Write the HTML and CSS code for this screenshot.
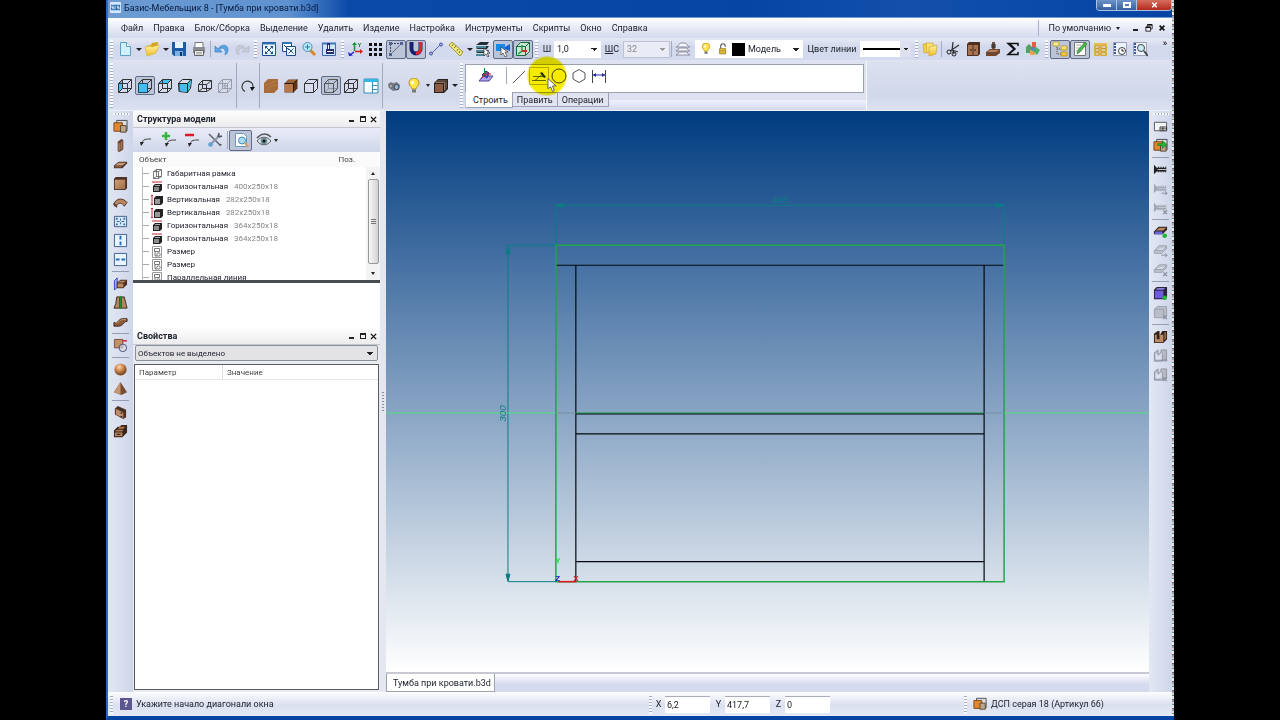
FILE: index.html
```html
<!DOCTYPE html>
<html lang="ru">
<head>
<meta charset="utf-8">
<title>Базис-Мебельщик 8 - [Тумба при кровати.b3d]</title>
<link rel="stylesheet" href="styles.css">
</head>
<body>
<svg class="defs" aria-hidden="true">
<defs>
<linearGradient id="wood" x1="0" y1="0" x2="1" y2="1"><stop offset="0" stop-color="#d0a078"/><stop offset="1" stop-color="#9c6c48"/></linearGradient>
<radialGradient id="ball" cx=".4" cy=".3" r=".7"><stop offset="0" stop-color="#ffd8a8"/><stop offset=".5" stop-color="#c8824a"/><stop offset="1" stop-color="#6a3c1c"/></radialGradient>
<linearGradient id="gold" x1="0" y1="0" x2="0" y2="1"><stop offset="0" stop-color="#fff3a0"/><stop offset="1" stop-color="#eebe28"/></linearGradient>
</defs>
<symbol id="cube" viewBox="0 0 16 16"><path d="M1.5 5.5h9v9h-9zM5.5 1.5h9v9h-9zM1.5 5.5l4-4M10.5 5.5l4-4M10.5 14.5l4-4M1.5 14.5l4-4" fill="none" stroke="#333"/></symbol>
<symbol id="cube-soft" viewBox="0 0 16 16"><path d="M5.500 1.500v9h9M1.500 14.500l4-4" fill="none" stroke="#8d93a3"/><path d="M1.500 5.500h9v9h-9zM1.500 5.500l4-4h9v9l-4 4M10.500 5.500l4-4" fill="none" stroke="#555"/></symbol>
<symbol id="cube-left" viewBox="0 0 16 16"><path d="M1.500 5.500l4-4v9l-4 4z" fill="#45bdf0"/><use href="#cube"/></symbol>
<symbol id="cube-front" viewBox="0 0 16 16"><use href="#cube"/><path d="M1.500 5.500h9v9h-9z" fill="#45bdf0" stroke="#174c68"/></symbol>
<symbol id="cube-top" viewBox="0 0 16 16"><path d="M1.500 5.500l4-4h9l-4 4z" fill="#45bdf0"/><use href="#cube"/></symbol>
<symbol id="cube-iso" viewBox="0 0 16 16"><path d="M1.500 5l4-3.500h9l-1 8.500-3 4.500-8-1z" fill="none" stroke="#222"/><path d="M2 5h8l4-2-1.500 8-3 3-7-1z" fill="#45bdf0"/><path d="M2 5.500h8.500l3.500-4M10.500 5.500v9M2 5.500v8" fill="none" stroke="#222"/></symbol>
<symbol id="cube-back" viewBox="0 0 16 16"><path d="M1.500 6.500h8v7h-8zM5.500 2.500h9v8h-9zM1.500 6.500l4-4M9.500 6.500l5-4M9.500 13.500l5-3M1.500 13.500l4-3" fill="none" stroke="#333"/></symbol>
<symbol id="cube-dim" viewBox="0 0 16 16"><path d="M1.500 5.500h9v9h-9zM5.500 1.500h9v9h-9zM1.500 5.500l4-4M10.500 5.500l4-4M10.500 14.500l4-4M1.500 14.500l4-4M8 5v6M5 8h6" fill="none" stroke="#999daa"/></symbol>
<symbol id="cube-clear" viewBox="0 0 16 16"><path d="M1.500 5.500h9v9h-9zM1.500 5.500l4-4h9v9l-4 4M10.500 5.500l4-4" fill="#d8dcee" stroke="#333"/></symbol>
<symbol id="cube-wood" viewBox="0 0 16 16"><path d="M1.500 5.500l4-4h9v9l-4 4h-9z" fill="#5e351a"/><path d="M2 6h8v8H2z" fill="#b97843"/><path d="M2.500 5l3-3h8l-3 3z" fill="#9a6235"/><path d="M1.500 5.500h9v9M10.500 5.500l4-4" fill="none" stroke="#2c1a0c"/></symbol>
<symbol id="block-wood" viewBox="0 0 16 16"><path d="M1 5l4-4h10v10l-4 4H1z" fill="#a86c3c"/><path d="M2 8l6-3 6-2M3 12l5-4 6-1" fill="none" stroke="#b47c4c"/></symbol>
<symbol id="views" viewBox="0 0 16 16"><path d="M1 1h14v14H1z" fill="#f8fdff" stroke="#3a8cb4"/><path d="M1 1h14v3H1z" fill="#38b6dc"/><path d="M9.500 4v11M9.500 7.500h5M9.500 11.500h5" stroke="#3a8cb4"/></symbol>
<symbol id="new" viewBox="0 0 16 16"><path d="M3.500 1.500h6l4 4v9h-10z" fill="#d2f0fb" stroke="#5e9ec0"/><path d="M9.500 1.500v4h4" fill="#fff" stroke="#5e9ec0"/></symbol>
<symbol id="open" viewBox="0 0 16 16"><path d="M2 5l5-1 1-2 6-1-1 9-10 4z" fill="#d2a520"/><path d="M1 6l5-1 2 1 7-2-3 8-9 3z" fill="url(#gold)" stroke="#d9ae2c" stroke-width=".6"/></symbol>
<symbol id="save" viewBox="0 0 16 16"><path d="M1 1h14v14H3l-2-2z" fill="#1d5ca4"/><path d="M4 1h8v6H4z" fill="#eaf4fd"/><path d="M4 10h8v5H4z" fill="#7cb0e2"/><path d="M9 11h2v4H9z" fill="#0e3566"/></symbol>
<symbol id="print" viewBox="0 0 16 16"><path d="M4 1.500h8v5H4z" fill="#fff" stroke="#777"/><path d="M2 6h12v6H2z" fill="#8a8e95"/><path d="M3.500 9.500h9v5h-9z" fill="#eee" stroke="#666"/><path d="M5 11.500h6M5 13h6" stroke="#888" stroke-width=".7"/></symbol>
<symbol id="undo" viewBox="0 0 16 16"><path d="M4 8c3-5 9-5 10 0 0 3-1 5-3 6 1-3 0-7-3-7-2 0-2 1-2 2l2 2H1V5z" fill="#58a6e6" stroke="#397fbe" stroke-width=".7"/></symbol>
<symbol id="redo" viewBox="0 0 16 16"><path d="M12 8c-3-5-9-5-10 0 0 3 1 5 3 6-1-3 0-7 3-7 2 0 2 1 2 2l-2 2h7V5z" fill="#c6c9d6" stroke="#b4b8c8" stroke-width=".7"/></symbol>
<symbol id="fit" viewBox="0 0 16 16"><path d="M1.500 1.500h13v13h-13z" fill="#eff8ff" stroke="#1c4f86"/><path d="M1 2.500h14" stroke="#2b75b4" stroke-width="2"/><path d="M5 6l6 6M11 6l-6 6" stroke="#1c4f86"/><path d="M4 5h3l-3 3zM12 5H9l3 3zM4 13v-3l3 3zM12 13v-3l-3 3z" fill="#1c4f86"/></symbol>
<symbol id="fit2" viewBox="0 0 16 16"><path d="M1.500 1.500h9v9h-9z" fill="#fff" stroke="#1c4f86"/><path d="M1 2h10" stroke="#2b75b4" stroke-width="2"/><path d="M3 4l5 5M5.500 5.500h9v9h-9z" fill="#eff8ff" stroke="#1c4f86"/><path d="M7.500 7.500l5 5M12.500 7.500l-5 5" stroke="#1c4f86"/></symbol>
<symbol id="lens" viewBox="0 0 16 16"><path d="M9 9l5 5" stroke="#d48a2c" stroke-width="3"/><circle cx="6.500" cy="6" r="4.500" fill="#b8e8f8" stroke="#4c8fb8"/><path d="M4 6h5M6.500 3.500v5" stroke="#2879a8"/></symbol>
<symbol id="pan" viewBox="0 0 16 16"><path d="M1.500 2.500h13v12h-13z" fill="#cfe6fb" stroke="#3b6ca8"/><path d="M1 2.500h14" stroke="#3b78bd" stroke-width="2"/><path d="M6 2h3v6h4v5H5V8h1z" fill="#26306e"/><path d="M7 4h1v4H7zM6 10h6v1H6z" fill="#fff"/></symbol>
<symbol id="axes" viewBox="0 0 16 16"><path d="M6.500 3v7" stroke="#169230" stroke-width="1.500"/><path d="M4 4l2.500-3L9 4z" fill="#169230"/><path d="M7 10.500h6" stroke="#cc2020" stroke-width="1.500"/><path d="M12 8l3 2.500-3 2.500z" fill="#cc2020"/><path d="M6 11l-4 3" stroke="#2020c8" stroke-width="1.500"/><path d="M0 11l1 4 4-.500z" fill="#2020c8"/><path d="M10 2l1.500 2L13 2M11.500 4v2" stroke="#169230" fill="none"/></symbol>
<symbol id="dots" viewBox="0 0 16 16"><path d="M1 2h3v3H1zM6 2h3v3H6zM11 2h3v3h-3zM1 7h3v3H1zM6 7h3v3H6zM11 7h3v3h-3zM1 12h3v3H1zM6 12h3v3H6zM11 12h3v3h-3z" fill="#111"/></symbol>
<symbol id="ortho" viewBox="0 0 16 16"><path d="M2.500 14V2.500H14" fill="none" stroke="#3a416f" stroke-dasharray="2 1"/><path d="M3 13l9-9" stroke="#3a416f" stroke-dasharray="2 1"/><path d="M1 1h3v3H1zM12 1h3v3h-3zM1 12h3v3H1z" fill="#536092"/></symbol>
<symbol id="magnet" viewBox="0 0 16 16"><path d="M3.500 1v7a4.500 4.500 0 0 0 9 0V1" fill="none" stroke="#17206e" stroke-width="4"/><path d="M8 12.500a4.500 4.500 0 0 0 4.500-4.500V1" fill="none" stroke="#d92828" stroke-width="3"/></symbol>
<symbol id="segment" viewBox="0 0 16 16"><path d="M3 13L13 3" stroke="#5360b0"/><circle cx="3" cy="12.500" r="1.500" fill="#a5b5ef" stroke="#4250a0"/><circle cx="13" cy="3.500" r="1.500" fill="#a5b5ef" stroke="#4250a0"/></symbol>
<symbol id="ruler" viewBox="0 0 16 16"><path d="M1 4l3-3 11 10-3 4z" fill="#f0ea78" stroke="#9c963e"/><path d="M5 3L4 5M8 5L6 7M10 8L9 10M12 10l-1 2" stroke="#777032"/></symbol>
<symbol id="sheets" viewBox="0 0 16 16"><path d="M1 4l4-3h9l-2 3zM1 8l4-3h9l-2 3zM1 12l4-3h9l-2 3z" fill="#252e34"/><path d="M1 5h10v2H1zM1 9h10v2H1zM1 13h8v2H1z" fill="#4b8896"/><path d="M9 7v8l2-2 2 3 1-1-2-3h3z" fill="#fff" stroke="#222" stroke-width=".7"/></symbol>
<symbol id="pick" viewBox="0 0 16 16"><path d="M1 3h9v7H1z" fill="#1688e8"/><path d="M10 6l5-3v7l-5-2z" fill="#1b5ecc"/><path d="M6 6v8l2-2 2 4 2-1-2-4h3z" fill="#fff" stroke="#333" stroke-width=".7"/></symbol>
<symbol id="cube-axes" viewBox="0 0 16 16"><path d="M1.500 5.500l4-4h9v9l-4 4h-9zM1.500 5.500h9v9M10.500 5.500l4-4" fill="#c5e4d2" stroke="#176b3c"/><path d="M7 4v6l-4 3" stroke="#1ca03e" stroke-width="1.500" fill="none"/><path d="M7 10h5" stroke="#c62d25" stroke-width="2"/></symbol>
<symbol id="layers" viewBox="0 0 16 16"><path d="M1 6c3 0 2-4 6-4h2c4 0 3 4 6 4zM1 10c2 0 2-2 3-3h8c1 1 1 3 3 3zM1 14c2 0 2-2 3-3h8c1 1 1 3 3 3z" fill="#f4f6fb" stroke="#8a8fa0"/></symbol>
<symbol id="bulb" viewBox="0 0 16 16"><path d="M6 11c0-2-3-3-3-6a5 5 0 0 1 10 0c0 3-3 4-3 6z" fill="#ffe44a" stroke="#ba8e22"/><path d="M6 11.500h4v3H6z" fill="#777"/><circle cx="6.500" cy="4.500" r="1.500" fill="#fff"/></symbol>
<symbol id="lock" viewBox="0 0 16 16"><path d="M5 7V4a3 3 0 0 1 6 0v1" fill="none" stroke="#555" stroke-width="1.500"/><path d="M3.500 7.500h8v7h-8z" fill="#f2cf4a" stroke="#8a6a10"/><path d="M4 10h7M4 12h7" stroke="#b18b24"/></symbol>
<symbol id="folders" viewBox="0 0 16 16"><path d="M1 3h7l1 7-7 2z" fill="#f2d24c" stroke="#c99c22" stroke-width=".6"/><path d="M4 2h7l1 9-7 1z" fill="#f9e272" stroke="#c99c22" stroke-width=".6"/><path d="M7 6l8-2-1 9-7 2z" fill="url(#gold)" stroke="#c99c22" stroke-width=".6"/></symbol>
<symbol id="cut" viewBox="0 0 16 16"><path d="M8 1L7 10M14 4L5 10M7 9l6 2M8 9l1 4" stroke="#333" stroke-width="1.300"/><circle cx="4" cy="11" r="2" fill="none" stroke="#222"/><circle cx="9" cy="13" r="2" fill="none" stroke="#222"/></symbol>
<symbol id="cabinet" viewBox="0 0 16 16"><path d="M2 3l2-2h11v12l-2 2H2z" fill="#4f2f20"/><path d="M3 4h4.500v10H3zM8.500 4H13v10H8.500z" fill="#a57252"/><path d="M6 8v2M10 8v2" stroke="#2b160c"/></symbol>
<symbol id="plinth" viewBox="0 0 16 16"><path d="M7 1h3v9H7z" fill="#6a5448"/><path d="M1 11l4-3h10v4l-4 3H1z" fill="#70472d"/><path d="M2 11l3-2h9l-3 2z" fill="#b48160"/><path d="M6 4h5M6 6h5" stroke="#222"/></symbol>
<symbol id="sigma" viewBox="0 0 16 16"><path d="M13 5V2.500H3l6 5.500-6 5.500h10V11M4 2l6 6-6 5" fill="none" stroke="#111" stroke-width="1.500"/></symbol>
<symbol id="shapes" viewBox="0 0 16 16"><path d="M1 6l3-3 3 3v6H1z" fill="#55a05c"/><path d="M7 1h4v6H7z" fill="#e95b49"/><path d="M5 9h5v5H5z" fill="#e9a14b"/><path d="M11 6l4 3-3 5-4-4z" fill="#4bae6e"/><circle cx="8" cy="8" r="2" fill="#4b89be"/></symbol>
<symbol id="treeicon" viewBox="0 0 16 16"><path d="M5 4v9h6M5 8h6" fill="none" stroke="#444" stroke-dasharray="1 1"/><path d="M1 1h6v4H1zM9 5h6v4H9zM9 11h6v4H9z" fill="url(#gold)" stroke="#b38d1b" stroke-width=".7"/></symbol>
<symbol id="edit" viewBox="0 0 16 16"><path d="M2.500 1.500h11v13h-11z" fill="#fff" stroke="#777"/><path d="M4 4h5M4 7h4M4 10h3" stroke="#aaa"/><path d="M5 13l1-4 7-8 2 2-7 8z" fill="#48b84d" stroke="#22702a" stroke-width=".6"/></symbol>
<symbol id="gridicon" viewBox="0 0 16 16"><path d="M2 2h13v13H2z" fill="#e7bd55"/><path d="M3 5h4v2H3zM9 5h5v2H9zM3 8h4v2H3zM9 8h5v2H9zM3 12h4v2H3zM9 12h5v2H9z" fill="#fff6cf" stroke="#a37420" stroke-width=".6"/></symbol>
<symbol id="history" viewBox="0 0 16 16"><path d="M1.500 1.500h13v13h-13z" fill="#edf1fb" stroke="#9ba3b9"/><path d="M3 2v12" stroke="#3459a8" stroke-dasharray="2 1" stroke-width="2"/><circle cx="10" cy="10" r="3.500" fill="#fff" stroke="#444"/><path d="M10 8v2h2" stroke="#222" fill="none"/></symbol>
<symbol id="preview" viewBox="0 0 16 16"><path d="M1.500 1.500h13v13h-13z" fill="#edf1fb" stroke="#9ba3b9"/><path d="M3 2v12" stroke="#3459a8" stroke-dasharray="2 1" stroke-width="2"/><circle cx="9" cy="7" r="3.500" fill="#cdeaf8" stroke="#444"/><path d="M12 10l4 5" stroke="#444" stroke-width="2"/></symbol>
<symbol id="rotate" viewBox="0 0 16 16"><path d="M5 13.500a5.500 5.500 0 1 1 8-4" fill="none" stroke="#333" stroke-width="1.200"/><path d="M10 9h5l-3 4z" fill="#111"/></symbol>
<symbol id="camera" viewBox="0 0 16 16"><path d="M2 6l3-2 2 1 4-1 3 3-1 5-6 1-4-3z" fill="#7d808c"/><circle cx="10.500" cy="9" r="2.500" fill="#8eb9e6" stroke="#444"/><circle cx="5" cy="8" r="2" fill="#aaadb8" stroke="#666"/></symbol>
<symbol id="box" viewBox="0 0 16 16"><path d="M1 5l4-4h10v10l-4 4H1z" fill="#27211e"/><path d="M2 6h8v8H2z" fill="#8a5a42"/><path d="M11 5l3-3v8l-3 3zM5 2h8l-2 3H2z" fill="#95705c"/><path d="M4 3h9v8" fill="none" stroke="#222"/></symbol>
<symbol id="place" viewBox="0 0 16 16"><path d="M1 13l4-5h10l-4 5z" fill="#aaa7df" stroke="#4f439b"/><path d="M4 7l4-4 3 2-2 5z" fill="#6656b8" stroke="#35298c"/><path d="M6.500 0v8" stroke="#168c2f"/><path d="M7 6h6M7 6l-4 5" stroke="#c62020"/></symbol>
<symbol id="window" viewBox="0 0 16 16"><path d="M1 12.500h14M2 8.500h10M4 12.500l8-7" fill="none" stroke="#3f5230" stroke-width=".8"/><path d="M9 5l2-1 4 5-2 1z" fill="#263a68"/></symbol>
<symbol id="panels" viewBox="0 0 16 16"><path d="M4 1.500h11v11H4z" fill="#d9dce2" stroke="#444"/><path d="M1 4h9v9H1z" fill="#e3872c" stroke="#7a4318"/><path d="M8 7h6v7H8z" fill="#bda78b" stroke="#554433"/></symbol>
<symbol id="vpanel" viewBox="0 0 16 16"><path d="M5 4l4-3 2 1v10l-4 3-2-1z" fill="#65422f"/><path d="M6 5l1 1v8l-1-1z" fill="#c79a78"/><path d="M8 5l2-2v8l-2 2z" fill="#a87554"/></symbol>
<symbol id="hpanel" viewBox="0 0 16 16"><path d="M1 9l5-4h9v2l-5 5H1z" fill="#4e3325"/><path d="M2 9l4-3h8l-4 3z" fill="#c79a78"/><path d="M2 10h7v1H2z" fill="#a87554"/></symbol>
<symbol id="fpanel" viewBox="0 0 16 16"><path d="M1 3l2-2h12v12l-2 2H1z" fill="#4e3325"/><path d="M2 4h11v10H2z" fill="url(#wood)"/></symbol>
<symbol id="arc" viewBox="0 0 16 16"><path d="M1 9c3-6 10-6 14-1l-3 4c-2-4-6-4-8-1z" fill="#b98763" stroke="#4e3325"/><path d="M1 9v2l3 2v-2" fill="#794c30" stroke="#4e3325"/></symbol>
<symbol id="split4" viewBox="0 0 16 16"><path d="M1.500 2.500h13v11h-13z" fill="#d7eafb" stroke="#3b5c8a"/><path d="M8 5v2M8 9v2M4 8h3M9 8h3" stroke="#2a578c"/><path d="M3 4h2v2H3zM11 4h2v2h-2zM3 10h2v2H3zM11 10h2v2h-2z" fill="#3e6da4"/></symbol>
<symbol id="splitv" viewBox="0 0 16 16"><path d="M1.500 1.500h13v13h-13z" fill="#e8f4ff" stroke="#3b5c8a"/><path d="M8 3v4M8 9v4" stroke="#1f70c0" stroke-width="2"/></symbol>
<symbol id="splith" viewBox="0 0 16 16"><path d="M1.500 1.500h13v13h-13z" fill="#e8f4ff" stroke="#3b5c8a"/><path d="M3 8h4M9 8h4" stroke="#1f70c0" stroke-width="2"/></symbol>
<symbol id="align" viewBox="0 0 16 16"><path d="M1.500 5v10l3-3V2z" fill="#9da9ed" stroke="#3246b8"/><path d="M4 7l4-3h7v5l-4 4H4z" fill="#513426"/><path d="M5 8h6v4H5zM5 7l3-2h6l-3 2z" fill="#bb8864"/></symbol>
<symbol id="curtain" viewBox="0 0 16 16"><path d="M4 2h3v12H1l2-5zM9 2h3l3 12H9z" fill="#b58460" stroke="#3f2a20"/><path d="M8 1v14" stroke="#238e2d" stroke-width="2"/></symbol>
<symbol id="wave" viewBox="0 0 16 16"><path d="M1 9c4 2 5-4 9-4h5v3c-3-1-4 5-9 5H1z" fill="#8b5a3a" stroke="#3e281b"/><path d="M2 9c4 2 5-3 8-3h4" stroke="#c99770" fill="none"/></symbol>
<symbol id="contour" viewBox="0 0 16 16"><path d="M1.500 1.500h9v9h-9z" fill="#c39069" stroke="#765039"/><path d="M10 3h5" stroke="#d8202c" stroke-width="1.500"/><circle cx="10.500" cy="10.500" r="4" fill="#dbdeec" fill-opacity=".6" stroke="#4b4f70"/></symbol>
<symbol id="sphere" viewBox="0 0 16 16"><circle cx="8" cy="8" r="6.500" fill="url(#ball)"/></symbol>
<symbol id="pyramid" viewBox="0 0 16 16"><path d="M8 1l7 11-6 3-8-3z" fill="#794d31"/><path d="M8 1v13l-7-2z" fill="#c59570"/></symbol>
<symbol id="door" viewBox="0 0 16 16"><path d="M2 4l3-3 9 4v8l-3 2-9-5z" fill="#4b3122"/><path d="M3 4l8 4v6l-8-4z" fill="#bd8b68"/><path d="M9 8v1M9 12v1" stroke="#111" stroke-width="2"/></symbol>
<symbol id="drawer" viewBox="0 0 16 16"><path d="M1 7l4-4h2l2-2h6v8l-5 5H1z" fill="#382419"/><path d="M2 9h8v4H2z" fill="#b78460"/><path d="M7 3h6l-2 2H5zM4 6h7l-1 2H2z" fill="#aa7754"/><path d="M4 11h4" stroke="#161616"/></symbol>
<symbol id="layout" viewBox="0 0 16 16"><path d="M1.500 3.500h13v9h-13z" fill="#f2f4fa" stroke="#555"/><path d="M7.500 8.500h7v4h-7zM10.500 8.500v4M8 10.500h7" fill="#fff" stroke="#333"/></symbol>
<symbol id="swap" viewBox="0 0 16 16"><use href="#panels"/><path d="M5 6h5V3l5 4-5 4V8H5z" fill="#21b935" stroke="#087018" stroke-width=".6"/></symbol>
<symbol id="screw" viewBox="0 0 16 16"><path d="M1 3l3 3v4l-3 3zM4 6h10v4H4z" fill="currentColor"/><path d="M6 5v6M8.500 5v6M11 5v6M13.500 5v6" stroke="currentColor"/><path d="M5 8h9" stroke="#c5cbd8"/></symbol>
<symbol id="edge" viewBox="0 0 16 16"><path d="M1 8l5-5h9v3l-5 5H1z" fill="#30221e"/><path d="M2 8h8v3H2z" fill="#6a67dc"/><path d="M3 7l4-3h7l-3 3z" fill="#b98660"/></symbol>
<symbol id="edge-dim" viewBox="0 0 16 16"><path d="M1.500 8l5-5h8v3l-5 5h-8zM2 8h8l4-4" fill="#bfc2cc" stroke="#9ca0ad"/></symbol>
<symbol id="face" viewBox="0 0 16 16"><path d="M1 4l3-3h11v10l-3 3H1z" fill="#2d2440"/><path d="M2 5h9v8H2z" fill="#6c5bdc"/><path d="M3 4l2-2h8l-2 2z" fill="#917fe4"/></symbol>
<symbol id="face-dim" viewBox="0 0 16 16"><path d="M1.500 4.500h10v9h-10zM1.500 4.500l3-3h10v10l-3 2" fill="#babdc8" stroke="#9ca0ad"/></symbol>
<symbol id="notch" viewBox="0 0 16 16"><path d="M1 5l4-3h2v5l3-5h5v9l-4 4H1z" fill="#35241b"/><path d="M2 6h2v5h3V6h4v8H2z" fill="#bd8b68"/><path d="M12 4l2-1v7l-2 2z" fill="#946547"/></symbol>
<symbol id="notch-dim" viewBox="0 0 16 16"><path d="M1.500 5l4-3v6l3-4V2h6v9l-4 3h-9zM2 6v7h8V6" fill="#b6b9c4" stroke="#9296a4"/></symbol>
<symbol id="plus-badge" viewBox="0 0 16 16"><circle cx="12.500" cy="12.500" r="2.500" fill="#21b436"/></symbol>
<symbol id="x-badge" viewBox="0 0 16 16"><path d="M11 11l4 4M15 11l-4 4" stroke="#858998" stroke-width="1.300"/></symbol>
<symbol id="arrow-badge" viewBox="0 0 16 16"><path d="M9 13h6M13 11l2 2-2 2" fill="none" stroke="#858998"/></symbol>
<symbol id="node" viewBox="0 0 16 16"><path d="M4 11c1-4 4-4 9-4" fill="none" stroke="#444"/><path d="M2 10h4l-3 4z" fill="#222"/></symbol>
<symbol id="node-add" viewBox="0 0 16 16"><use href="#node" x="2" y="1"/><path d="M5 0v8M1 4h8" stroke="#35b73b" stroke-width="2.500"/></symbol>
<symbol id="node-del" viewBox="0 0 16 16"><use href="#node" x="2" y="1"/><path d="M1 3h9" stroke="#d71c2b" stroke-width="2.500"/></symbol>
<symbol id="tools" viewBox="0 0 16 16"><path d="M2 2l11 11" stroke="#5b6371" stroke-width="1.500"/><path d="M13 3L4 12" stroke="#8c95a4" stroke-width="2"/><circle cx="3.500" cy="12.500" r="2.300" fill="#62a0d2"/><path d="M11 5l1-4M12 5l3-1M13 14l1-2" stroke="#4f5560" stroke-width="1.500"/></symbol>
<symbol id="docview" viewBox="0 0 16 16"><path d="M2.500 1.500h8l3 3v10h-11z" fill="#fff" stroke="#6897b8"/><circle cx="9" cy="8.500" r="3.500" fill="#a8dcf4" stroke="#438bb0"/><path d="M11.500 11l4 4" stroke="#dba16a" stroke-width="2"/></symbol>
<symbol id="eye" viewBox="0 0 16 16"><path d="M1 9c4-5 10-5 14 0-4 5-10 5-14 0z" fill="#dce5e8" stroke="#555"/><circle cx="8" cy="9" r="3.300" fill="#6d8f99"/><circle cx="8" cy="9" r="1.500" fill="#111"/><path d="M1 6c4-5 10-5 14-1" stroke="#555" fill="none" stroke-width="1.500"/></symbol>
<symbol id="t-frame" viewBox="0 0 12 12"><path d="M2.500 3.500h5v7h-5zM5.500 1.500h5v7h-5zM2.500 3.500l3-2M7.500 3.500l3-2M7.500 10.500l3-2M2.500 10.500l3-2" fill="none" stroke="#555" stroke-width=".8"/></symbol>
<symbol id="t-hor" viewBox="0 0 12 12"><path d="M1 1h10" stroke="#c62639"/><path d="M2 5l2-2h7v6l-2 2H2z" fill="#222"/><path d="M3 6h5v4H3z" fill="#8a8a8a"/><path d="M4 4h5v1H4z" fill="#aaa"/></symbol>
<symbol id="t-ver" viewBox="0 0 12 12"><path d="M1 1v10M0 1.500h2M0 10.500h2" stroke="#c62639"/><path d="M3 4l2-2h7v7l-2 2H3z" fill="#222"/><path d="M4 5h5v5H4z" fill="#999"/></symbol>
<symbol id="t-dim" viewBox="0 0 12 12"><path d="M1.500 .5h9v11h-9z" fill="#fff" stroke="#999"/><path d="M3.500 2.500h5v3h-5zM4 6v4h2" fill="none" stroke="#555" stroke-width=".8"/><circle cx="7.500" cy="8.500" r="1.700" fill="none" stroke="#555" stroke-width=".8"/></symbol>
</svg>

<main class="window">
  <header class="titlebar">
    <svg class="app-icon" viewBox="0 0 12 12"><rect width="12" height="12" rx="1" fill="#d5e9fa"/><rect x="1" y="3" width="10" height="6" fill="#236bb2"/><path d="M4 4.500H2v1.500h2v1.500H2M5.500 4v4M10 4.500H8v1.500h2v1.500H8" fill="none" stroke="#fff" stroke-width=".8"/></svg>
    <h1>Базис-Мебельщик 8 - [Тумба при кровати.b3d]</h1>
    <div class="window-buttons"><button aria-label="Свернуть"><i class="win-min"></i></button><button aria-label="Развернуть"><i class="win-max"></i></button><button class="close" aria-label="Закрыть"><svg viewBox="0 0 8 8"><path d="M1 1l6 6M7 1L1 7" stroke="#fff" stroke-width="2"/></svg></button></div>
  </header>

  <nav class="menubar">
    <button>Файл</button><button>Правка</button><button>Блок/Сборка</button><button>Выделение</button><button>Удалить</button><button>Изделие</button><button>Настройка</button><button>Инструменты</button><button>Скрипты</button><button>Окно</button><button>Справка</button>
    <div class="menu-right"><button class="profile">По умолчанию <i class="caret small"></i></button><button class="mdi" aria-label="Свернуть документ"><i class="bar"></i></button><button class="mdi" aria-label="Восстановить документ"><svg viewBox="0 0 10 10"><path d="M3 3V1h6v5H7M1 4h6v5H1z" fill="none" stroke="#111"/><path d="M1 4h6M3 1h6" stroke="#111" stroke-width="2"/></svg></button><button class="mdi" aria-label="Закрыть документ"><svg viewBox="0 0 10 10"><path d="M2 2l6 6M8 2L2 8" stroke="#111" stroke-width="2"/></svg></button></div>
  </nav>

  <div class="toolbar main-tools">
    <span class="grip"></span>
    <button aria-label="Новый"><svg><use href="#new"/></svg></button><button class="drop" aria-label="Варианты"><i class="caret"></i></button>
    <button aria-label="Открыть"><svg><use href="#open"/></svg></button><button class="drop" aria-label="Недавние"><i class="caret"></i></button>
    <button aria-label="Сохранить"><svg><use href="#save"/></svg></button><button aria-label="Печать"><svg><use href="#print"/></svg></button><span class="sep"></span>
    <button aria-label="Отменить"><svg><use href="#undo"/></svg></button><button aria-label="Вернуть"><svg><use href="#redo"/></svg></button><span class="grip"></span>
    <button aria-label="Показать все"><svg><use href="#fit"/></svg></button><button aria-label="Показать выделенное"><svg><use href="#fit2"/></svg></button><button aria-label="Масштаб"><svg><use href="#lens"/></svg></button><button aria-label="Сдвиг"><svg><use href="#pan"/></svg></button><span class="grip"></span>
    <button aria-label="Оси"><svg><use href="#axes"/></svg></button><button aria-label="Сетка"><svg><use href="#dots"/></svg></button><button class="on" aria-label="Орто"><svg><use href="#ortho"/></svg></button><button class="on" aria-label="Привязка"><svg><use href="#magnet"/></svg></button><button aria-label="Отрезок"><svg><use href="#segment"/></svg></button><button aria-label="Измерить"><svg><use href="#ruler"/></svg></button><button class="drop" aria-label="Способы измерения"><i class="caret"></i></button>
    <button aria-label="Слои материала"><svg><use href="#sheets"/></svg></button><button class="on" aria-label="Выбор"><svg><use href="#pick"/></svg></button><button class="on" aria-label="Система координат"><svg><use href="#cube-axes"/></svg></button><span class="grip"></span>
    <label class="step-label" for="step">Ш</label><select id="step" class="combo num"><option>1,0</option></select>
    <label class="grid-label" for="grid-step"><u>Ш</u>С</label><select id="grid-step" class="combo num" disabled><option>32</option></select><span class="sep"></span>
    <button aria-label="Слои"><svg><use href="#layers"/></svg></button>
    <div class="layer-box"><svg><use href="#bulb"/></svg><svg><use href="#lock"/></svg><span class="swatch"></span><select class="combo" aria-label="Слой"><option>Модель</option></select></div>
    <label class="line-label" for="line-color">Цвет линии</label><div class="line-box"><span></span><select id="line-color" class="combo"><option></option></select></div><span class="grip"></span>
    <button aria-label="Библиотека"><svg><use href="#folders"/></svg></button><span class="sep"></span>
    <button aria-label="Раскрой"><svg><use href="#cut"/></svg></button><button aria-label="Шкаф"><svg><use href="#cabinet"/></svg></button><button aria-label="Станок"><svg><use href="#plinth"/></svg></button><button aria-label="Смета"><svg><use href="#sigma"/></svg></button><button aria-label="Материалы"><svg><use href="#shapes"/></svg></button><span class="grip"></span>
    <button class="on" aria-label="Структура"><svg><use href="#treeicon"/></svg></button><button class="on" aria-label="Свойства"><svg><use href="#edit"/></svg></button><button aria-label="Таблица"><svg><use href="#gridicon"/></svg></button><button aria-label="История"><svg><use href="#history"/></svg></button><button aria-label="Просмотр"><svg><use href="#preview"/></svg></button>
    <button class="more" aria-label="Ещё">»</button>
  </div>

  <div class="second-row">
    <div class="toolbar view-tools">
      <span class="grip"></span>
      <button aria-label="Слева"><svg><use href="#cube-left"/></svg></button><button class="on" aria-label="Спереди"><svg><use href="#cube-front"/></svg></button><button aria-label="Сверху"><svg><use href="#cube-top"/></svg></button><button aria-label="Изометрия"><svg><use href="#cube-iso"/></svg></button><button aria-label="Сзади"><svg><use href="#cube-back"/></svg></button><button disabled aria-label="По объекту"><svg><use href="#cube-dim"/></svg></button><span class="sep"></span>
      <button aria-label="Повернуть"><svg><use href="#rotate"/></svg></button><span class="sep"></span>
      <button aria-label="Текстура"><svg><use href="#block-wood"/></svg></button><button aria-label="Текстура с рёбрами"><svg><use href="#cube-wood"/></svg></button><button aria-label="Без невидимых линий"><svg><use href="#cube-clear"/></svg></button><button class="on" aria-label="Полутоновый каркас"><svg><use href="#cube-soft"/></svg></button><button aria-label="Каркас"><svg><use href="#cube"/></svg></button><button aria-label="Виды"><svg><use href="#views"/></svg></button><span class="sep"></span>
      <button aria-label="Камера"><svg><use href="#camera"/></svg></button><button aria-label="Свет"><svg><use href="#bulb"/></svg></button><button class="drop" aria-label="Источники"><i class="caret small"></i></button><button aria-label="Модель"><svg><use href="#box"/></svg></button><button class="drop" aria-label="Варианты модели"><i class="caret"></i></button><span class="grip"></span>
    </div>
    <section class="palette">
      <div class="palette-tools">
        <button aria-label="Разместить"><svg><use href="#place"/></svg></button><span class="sep"></span>
        <button aria-label="Линия"><svg viewBox="0 0 16 16"><path d="M2 15L14 3" stroke="#555"/></svg></button>
        <button class="current" aria-label="Окно"><svg><use href="#window"/></svg></button>
        <button aria-label="Окружность"><svg viewBox="0 0 16 16"><circle cx="8" cy="8" r="7" fill="none" stroke="#444"/></svg></button>
        <button aria-label="Многоугольник"><svg viewBox="0 0 16 16"><path d="M8 1.500l6 3.500v6l-6 3.500L2 11V5z" fill="none" stroke="#555"/></svg></button>
        <button aria-label="Размер"><svg viewBox="0 0 16 16"><path d="M1.500 2v13M14.500 2v13" stroke="#444"/><path d="M2 7h12" stroke="#2424ac"/><path d="M2 7l3-2v4zM14 7l-3-2v4z" fill="#2424ac"/></svg></button>
        <span class="halo"></span><svg class="pointer" viewBox="0 0 12 16"><path d="M1 1v11l3-2 2 5 2-1-2-5h4z" fill="#fff" stroke="#555"/></svg>
      </div>
      <div class="palette-tabs"><button class="active">Строить</button><button>Править</button><button>Операции</button></div>
    </section>
  </div>

  <div class="workspace">
    <aside class="rail">
      <span class="grip-h"></span>
      <button aria-label="Материал"><svg><use href="#panels"/></svg></button><button aria-label="Вертикальная панель"><svg><use href="#vpanel"/></svg></button><button aria-label="Горизонтальная панель"><svg><use href="#hpanel"/></svg></button><button aria-label="Фронтальная панель"><svg><use href="#fpanel"/></svg></button><button aria-label="Гнутая панель"><svg><use href="#arc"/></svg></button><button aria-label="Деление"><svg><use href="#split4"/></svg></button><button aria-label="Делить по вертикали"><svg><use href="#splitv"/></svg></button><button aria-label="Делить по горизонтали"><svg><use href="#splith"/></svg></button><span class="rule"></span>
      <button aria-label="Выровнять"><svg><use href="#align"/></svg></button><button aria-label="Симметрия"><svg><use href="#curtain"/></svg></button><button aria-label="Волна"><svg><use href="#wave"/></svg></button><span class="rule"></span>
      <button aria-label="Контур"><svg><use href="#contour"/></svg></button><span class="rule"></span>
      <button aria-label="Вращение"><svg><use href="#sphere"/></svg></button><button aria-label="Выдавливание"><svg><use href="#pyramid"/></svg></button><span class="rule"></span>
      <button aria-label="Дверь"><svg><use href="#door"/></svg></button><button aria-label="Ящик"><svg><use href="#drawer"/></svg></button>
    </aside>

    <div class="panels">
      <section class="structure">
        <header class="panel-title"><h2>Структура модели</h2><button aria-label="Свернуть"><i class="bar"></i></button><button aria-label="Развернуть"><i class="square"></i></button><button aria-label="Закрыть"><svg viewBox="0 0 8 8"><path d="M1 1l6 6M7 1L1 7" stroke="#111" stroke-width="1.500"/></svg></button></header>
        <div class="panel-tools"><button aria-label="Узел"><svg><use href="#node"/></svg></button><button aria-label="Добавить"><svg><use href="#node-add"/></svg></button><button aria-label="Удалить"><svg><use href="#node-del"/></svg></button><button aria-label="Настроить"><svg><use href="#tools"/></svg></button><span class="sep"></span><button class="on" aria-label="Просмотр"><svg><use href="#docview"/></svg></button><button aria-label="Видимость"><svg><use href="#eye"/></svg></button><button class="drop" aria-label="Варианты"><i class="caret small"></i></button></div>
        <div class="list-head"><span>Объект</span><span>Поз.</span></div>
        <div class="list-body">
          <ul class="tree">
            <li><svg><use href="#t-frame"/></svg>Габаритная рамка</li>
            <li><svg><use href="#t-hor"/></svg>Горизонтальная <span>400x250x18</span></li>
            <li><svg><use href="#t-ver"/></svg>Вертикальная <span>282x250x18</span></li>
            <li><svg><use href="#t-ver"/></svg>Вертикальная <span>282x250x18</span></li>
            <li><svg><use href="#t-hor"/></svg>Горизонтальная <span>364x250x18</span></li>
            <li><svg><use href="#t-hor"/></svg>Горизонтальная <span>364x250x18</span></li>
            <li><svg><use href="#t-dim"/></svg>Размер</li>
            <li><svg><use href="#t-dim"/></svg>Размер</li>
            <li><svg><use href="#t-dim"/></svg>Параллельная линия</li>
          </ul>
          <div class="scroll"><i class="caret small up"></i><span class="thumb"></span><i class="caret small"></i></div>
        </div>
      </section>
      <section class="properties">
        <header class="panel-title"><h2>Свойства</h2><button aria-label="Свернуть"><i class="bar"></i></button><button aria-label="Развернуть"><i class="square"></i></button><button aria-label="Закрыть"><svg viewBox="0 0 8 8"><path d="M1 1l6 6M7 1L1 7" stroke="#111" stroke-width="1.500"/></svg></button></header>
        <div class="prop-select"><select class="combo" aria-label="Объекты"><option>Объектов не выделено</option></select></div>
        <div class="prop-grid"><table><thead><tr><th>Параметр</th><th>Значение</th></tr></thead></table></div>
      </section>
    </div>
    <div class="splitter"><span></span></div>

    <section class="document">
      <div class="canvas">
        <svg viewBox="0 0 763 562" fill="none">
          <g stroke="#0b7c86"><path d="M169 94.500h449M169.500 94v41M618.500 94v41M121.500 134.500h48M121.500 134v337M121.500 471.500h48"/><path d="M169 94.500l8-2v4zM618 94.500l-8-2v4zM121.500 135l-2 8h4zM121.500 471l-2-7h4z" fill="#0b7c86"/></g>
          <path d="M170 154.500h448M189.500 154v317M598.500 154v317M189 303.500h409M189 323.500h409M189 451.500h409" stroke="#05080c" stroke-width="1.200"/>
          <path d="M169.500 134.500h449v337h-449z" stroke="#22a34c" stroke-width="1.500"/>
          <path d="M0 302.500h169M619 302.500h144" stroke="#4fe07f"/><path d="M170 302.500h19M599 302.500h19" stroke="#7a8fa2"/><path d="M189 302.500h409" stroke="#1f9c4c"/>
          <path d="M172 471.500h18" stroke="#e01820" stroke-width="1.500"/>
          <g class="dims"><text x="394" y="92" text-anchor="middle">400</text><text transform="translate(120 303) rotate(-90)" text-anchor="middle">300</text></g>
          <g class="axis-labels"><text x="169" y="471" fill="#1414cc">Z</text><text x="187" y="471" fill="#e01820">X</text><text x="169" y="453" fill="#28d83c">Y</text></g>
        </svg>
      </div>
      <div class="doc-tabs"><button>Тумба при кровати.b3d</button></div>
    </section>

    <aside class="rail right">
      <span class="grip-h"></span>
      <button aria-label="Компоновка"><svg><use href="#layout"/></svg></button><button aria-label="Замена"><svg><use href="#swap"/></svg></button><span class="rule"></span>
      <button aria-label="Крепёж"><svg><use href="#screw"/></svg></button><button disabled aria-label="Сдвинуть крепёж"><svg><use href="#screw"/><use href="#arrow-badge"/></svg></button><button disabled aria-label="Удалить крепёж"><svg><use href="#screw"/><use href="#x-badge"/></svg></button><span class="rule"></span>
      <button aria-label="Кромка"><svg><use href="#edge"/><use href="#plus-badge"/></svg></button><button disabled aria-label="Изменить кромку"><svg><use href="#edge-dim"/><use href="#arrow-badge"/></svg></button><button disabled aria-label="Удалить кромку"><svg><use href="#edge-dim"/><use href="#x-badge"/></svg></button><span class="rule"></span>
      <button aria-label="Облицовка"><svg><use href="#face"/><use href="#plus-badge"/></svg></button><button disabled aria-label="Удалить облицовку"><svg><use href="#face-dim"/><use href="#x-badge"/></svg></button><span class="rule"></span>
      <button aria-label="Паз"><svg><use href="#notch"/></svg></button><button disabled aria-label="Изменить паз"><svg><use href="#notch-dim"/><use href="#arrow-badge"/></svg></button><button disabled aria-label="Удалить паз"><svg><use href="#notch-dim"/><use href="#x-badge"/></svg></button>
    </aside>
  </div>

  <footer class="status">
    <div class="hint"><span class="grip"></span><b>?</b><span>Укажите начало диагонали окна</span></div>
    <div class="coords"><span class="grip"></span><label for="cx">X</label><input id="cx" value="6,2"><label for="cy">Y</label><input id="cy" value="417,7"><label for="cz">Z</label><input id="cz" value="0"></div>
    <div class="material"><span class="grip"></span><svg><use href="#panels"/></svg><span>ДСП серая 18 (Артикул 66)</span></div>
  </footer>
</main>
</body>
</html>
```

FILE: styles.css
```css
* { box-sizing: border-box; }
body { margin: 0; background: #000; font: 9px/14px Roboto, "Noto Sans", sans-serif; color: #20242e; }
button, input, select { font: inherit; color: inherit; }
button { border: 1px solid transparent; background: none; padding: 0; flex: none; }
h1, h2 { margin: 0; font-size: 9px; font-weight: 400; }
.defs { position: absolute; width: 0; height: 0; }

.window { position: relative; display: flex; flex-direction: column; height: 100vh; margin: 0 106px; padding-right: 2px; border-left: 2px solid #2b67c0; border-bottom: 4px solid #0544a2; background: #d4daec; overflow: hidden; }
.window::after { content: ""; position: absolute; top: 0; right: 0; bottom: 0; width: 2px; background: repeating-linear-gradient(#d9c8dd 0 2px, #5b9b72 2px 3px, #e8e8f0 3px 6px, #7b5e86 6px 7px, #98a8a0 7px 9px); }

.titlebar { display: flex; flex: none; height: 18px; padding-bottom: 2px; align-items: center; gap: 3px; background: linear-gradient(90deg, #6d9cd2 0, #5f92cf 180px, #0b4aa8 240px, #0745a4 60%, #1350ac 75%, #0544a4); border-bottom: 1px solid #6f9bd5; }
.titlebar h1 { color: #061a40; line-height: 14px; }
.app-icon { width: 11px; height: 11px; margin-left: 2px; }
.window-buttons { display: flex; align-self: flex-start; margin-left: auto; border: 1px solid #a9c4e6; border-top: 0; border-radius: 0 0 4px 4px; overflow: hidden; height: 11px; }
.window-buttons button { display: grid; place-items: center; width: 20px; height: 10px; background: linear-gradient(#6d93c8, #35609f); border: 0; border-right: 1px solid #a9c4e6; }
.window-buttons .close { width: 34px; background: linear-gradient(#d4705e, #b5281c); border: 0; }
.close svg { width: 7px; height: 6px; }
.win-min { width: 8px; height: 3px; background: #fff; }
.win-max { width: 8px; height: 6px; border: 2px solid #fff; }

.menubar { display: flex; flex: none; height: 20px; align-items: center; padding-left: 13px; gap: 10px; background: linear-gradient(#fdfdff, #e3e7f5 60%, #d4daee); white-space: nowrap; }
.menubar > button { border: 0; }
.menu-right { display: flex; align-items: center; margin-left: auto; border-left: 1px solid #aab1c8; padding: 0 4px 0 8px; }
.profile { display: flex; align-items: center; gap: 5px; margin-right: 8px; }
.mdi { display: grid; place-items: center; width: 13px; height: 12px; }
.mdi svg { width: 8px; height: 8px; }
.bar { width: 5px; height: 2px; background: #222; margin-top: 4px; }
.caret { border: 3px solid transparent; border-top-color: #222; border-bottom: 0; }
.caret.small { border-width: 3px 2px 0; }
.caret.up { border-top: 0; border-bottom: 3px solid #222; }

.toolbar { display: flex; align-items: center; background: linear-gradient(#e6e9f6, #d3d9ec 40%, #d5dbee); flex: none; }
.toolbar button { display: grid; place-items: center; width: 20px; height: 19px; }
.toolbar svg { width: 16px; height: 16px; }
.toolbar .drop { width: 7px; }
.toolbar button.on, .panel-tools .on { background: #bcc4d8; border: 1px solid #626c86; border-radius: 2px; }
.grip { width: 3px; align-self: stretch; margin: 2px; background: repeating-linear-gradient(#f9faff 0 2px, #a6adc4 2px 3px); flex: none; }
.sep { width: 1px; align-self: stretch; margin: 3px 1px; background: #a2a9c0; flex: none; }
.main-tools { height: 23px; border-bottom: 1px solid #dfe3f2; white-space: nowrap; }
.main-tools label { text-align: center; flex: none; }
.step-label { width: 14px; }
.grid-label { width: 22px; }
.line-label { width: 56px; }
.combo { appearance: none; border: 0; border-radius: 0; margin: 0; height: 17px; padding: 0 14px 0 3px; line-height: 14px; background: #fff conic-gradient(from -45deg at 50% 100%, #222 90deg, transparent 0) right 4px center / 6px 3px no-repeat; }
.main-tools .combo { padding-bottom: 1px; }
.combo { background-image: linear-gradient(45deg, transparent 50%, #222 50%), linear-gradient(-45deg, transparent 50%, #222 50%); background-image: conic-gradient(from -45deg at 50% 100%, #222 90deg, transparent 0); }
.combo:disabled { color: #888; opacity: 1; border: 1px solid #bdc3d5; background-color: #e9ecf6; background-image: conic-gradient(from -45deg at 50% 100%, #999 90deg, transparent 0); }
.num { width: 47px; }
.layer-box { display: flex; align-items: center; width: 108px; height: 18px; margin: 0 1px 0 2px; background: #fff; flex: none; }
.layer-box svg { width: 12px; height: 12px; margin: 0 0 0 5px; flex: none; }
.swatch { width: 13px; height: 13px; background: #000; margin-left: 3px; flex: none; }
.layer-box .combo { flex: 1; min-width: 0; }
.line-box { display: flex; align-items: center; width: 51px; height: 16px; margin-right: 2px; background: #fff; flex: none; }
.line-box span { width: 37px; margin-left: 3px; border-top: 2px solid #000; }
.line-box .combo { width: 11px; height: 16px; padding: 0; background-color: #dce0ef; background-position: center; }
.toolbar .more { margin-left: auto; align-self: start; width: 14px; height: 10px; line-height: 8px; font-weight: 700; }

.second-row { display: flex; flex: none; height: 50px; background: linear-gradient(#dde1f0, #d1d8ea 70%, #dce1f1); border-bottom: 1px solid #eef1fa; }
.view-tools { background: none; }
.view-tools .sep { margin: 2px 1px; }
.palette { width: 402px; border-right: 1px solid #f4f6fc; padding-top: 3px; background: linear-gradient(#dde1f0 80%, #eef0fa 80%, #d4daee); }
.palette-tools { position: relative; display: flex; align-items: center; width: 399px; height: 29px; padding: 0 0 6px 10px; background: #fff; border: 1px solid #9aa1b5; }
.palette-tools button { width: 20px; height: 18px; display: grid; place-items: center; }
.palette-tools svg { width: 16px; height: 16px; }
.palette-tools .sep { margin: 2px 2px 2px 10px; }
.palette-tools .current { border-color: #b8bbc5; }
.halo { position: absolute; left: 61px; top: -9px; width: 40px; height: 40px; border-radius: 50%; background: radial-gradient(closest-side, #f5ea00 90%, #fbf6a0); mix-blend-mode: multiply; pointer-events: none; }
.palette-tools .pointer { position: absolute; left: 81px; top: 12px; width: 11px; height: 16px; }
.palette-tabs { display: flex; align-items: flex-start; height: 16px; }
.palette-tabs button { height: 14px; line-height: 12px; padding: 0 4px; background: #e2e5f1; border: 1px solid #9aa1b5; border-left: 0; border-top: 0; }
.palette-tabs .active { background: #fff; height: 16px; line-height: 17px; padding: 0 4px 0 7px; margin-top: -1px; position: relative; border-left: 1px solid #c8cddd; }

.workspace { display: flex; flex: 1; min-height: 0; background: #d4daec; }
.rail { width: 25px; flex: none; display: flex; flex-direction: column; align-items: center; padding-top: 1px; background: linear-gradient(90deg, #e3e7f4, #cfd6ea); }
.rail.right { width: 23px; }
.grip-h { width: 16px; height: 2px; margin: 1px 0 2px; background: repeating-linear-gradient(90deg, #fff 0 2px, #a6adc4 2px 3px); }
.rail button { display: grid; place-items: center; width: 19px; height: 19px; }
.rail svg { width: 15px; height: 15px; }
.rail .rule { width: 17px; height: 1px; margin: 2px 0; background: #969eb4; flex: none; }
.rail.right button { color: #222; }
.rail.right button:disabled { color: #a3a7b3; }

.panels { width: 247px; flex: none; display: flex; flex-direction: column; background: #e9ebf0; font-size: 8px; line-height: 13px; }
.structure { height: 217px; flex: none; background: #fff; }
.panel-title { display: flex; align-items: center; height: 17px; padding: 0 1px 0 4px; background: linear-gradient(#fdfdfd, #ececee); border-bottom: 1px solid #c4c6ce; }
.panel-title h2 { flex: 1; font: 700 9px/14px Roboto, "Noto Sans", sans-serif; }
.panel-title button { display: grid; place-items: center; width: 11px; height: 12px; }
.panel-title svg { width: 7px; height: 7px; }
.square { width: 6px; height: 6px; border: 1px solid #222; border-top-width: 2px; }
.panel-tools { display: flex; align-items: center; height: 24px; padding: 0 1px; background: linear-gradient(#e9ecf7, #cfd6ea); }
.panel-tools button { display: grid; place-items: center; width: 23px; height: 21px; }
.panel-tools svg { width: 16px; height: 16px; }
.panel-tools .drop { width: 5px; margin-left: -2px; }
.panel-tools .sep { margin: 3px 1px; }
.list-head { display: flex; justify-content: space-between; height: 15px; padding: 1px 24px 0 5px; margin: 0 1px; background: #fafafa; color: #444; }
.list-body { display: flex; height: 116px; border-bottom: 3px solid #484b50; overflow: hidden; }
.tree { list-style: none; margin: 0 0 0 9px; padding: 0; flex: 1; border-left: 1px solid #bbb; height: 113px; overflow: hidden; }
.tree li { display: flex; align-items: center; height: 13px; white-space: nowrap; }
.tree li::before { content: ""; width: 6px; border-top: 1px solid #aaa; margin-right: 2px; }
.tree svg { width: 12px; height: 12px; margin-right: 4px; flex: none; }
.tree span { color: #858585; margin-left: 6px; }
.scroll { width: 14px; background: #f3f3f3; display: flex; flex-direction: column; align-items: center; padding: 5px 0; }
.thumb { flex: 1; width: 11px; margin: 4px 0 8px; border: 1px solid #989898; border-radius: 2px; background: repeating-linear-gradient(#777 0 1px, transparent 1px 2px) center / 5px 5px no-repeat, linear-gradient(90deg, #f7f7f7, #d2d2d6); }
.properties { flex: 1; min-height: 0; display: flex; flex-direction: column; }
.prop-select { display: flex; padding: 0 2px; height: 19px; }
.prop-select .combo { width: 100%; height: 16px; padding-left: 2px; border: 1px solid #8b8f98; border-radius: 2px; background-color: #e3e3e5; line-height: 13px; }
.prop-grid { flex: 1; margin: 0 1px 2px; border: 1px solid #555a64; background: #fff; }
.prop-grid table { width: 100%; border-collapse: collapse; table-layout: fixed; }
.prop-grid th { height: 14px; padding: 1px 4px 0; font-weight: 400; color: #444; text-align: left; border-bottom: 1px solid #e8e8ec; }
.prop-grid th:first-child { width: 36%; border-right: 1px solid #ddd; }
.splitter { display: flex; align-items: center; justify-content: center; width: 6px; flex: none; background: #e4e7f0; }
.splitter span { width: 2px; height: 20px; background: repeating-linear-gradient(#888ea0 0 1px, transparent 1px 3px); }

.document { flex: 1; min-width: 0; display: flex; flex-direction: column; }
.canvas { flex: 1; min-height: 0; background: linear-gradient(#003c80, #fff); }
.canvas svg { display: block; width: 100%; height: 100%; }
.dims { font: italic 10px "Liberation Sans", sans-serif; fill: #0b7c86; }
.axis-labels { font: 700 8px "Liberation Sans", sans-serif; }
.doc-tabs { height: 20px; flex: none; border-top: 2px solid #c6c9d2; background: linear-gradient(#fbfcff, #d5dbee 60%); }
.doc-tabs button { height: 18px; padding: 2px 3px 0 6px; background: #fff; border: 1px solid #9da3b2; border-top: 0; display: block; line-height: 15px; }

.status { display: flex; align-items: center; height: 24px; flex: none; background: linear-gradient(#fdfdff, #dbe0f0 55%, #e6eaf6); }
.status > div { display: flex; align-items: center; align-self: stretch; white-space: nowrap; }
.hint { width: 539px; gap: 4px; }
.hint b { width: 12px; height: 12px; margin-left: 1px; background: #5c5791; color: #fff; text-align: center; line-height: 12px; }
.coords { flex: 1; }
.coords input { width: 45px; height: 17px; border: 0; border-top: 1px solid #a9aebc; padding: 0 2px; margin: 0 4px 0 2px; background: #fff; min-width: 0; }
.coords label { width: 9px; text-align: center; }
.material { width: 210px; gap: 4px; }
.material svg { width: 14px; height: 14px; }
```
